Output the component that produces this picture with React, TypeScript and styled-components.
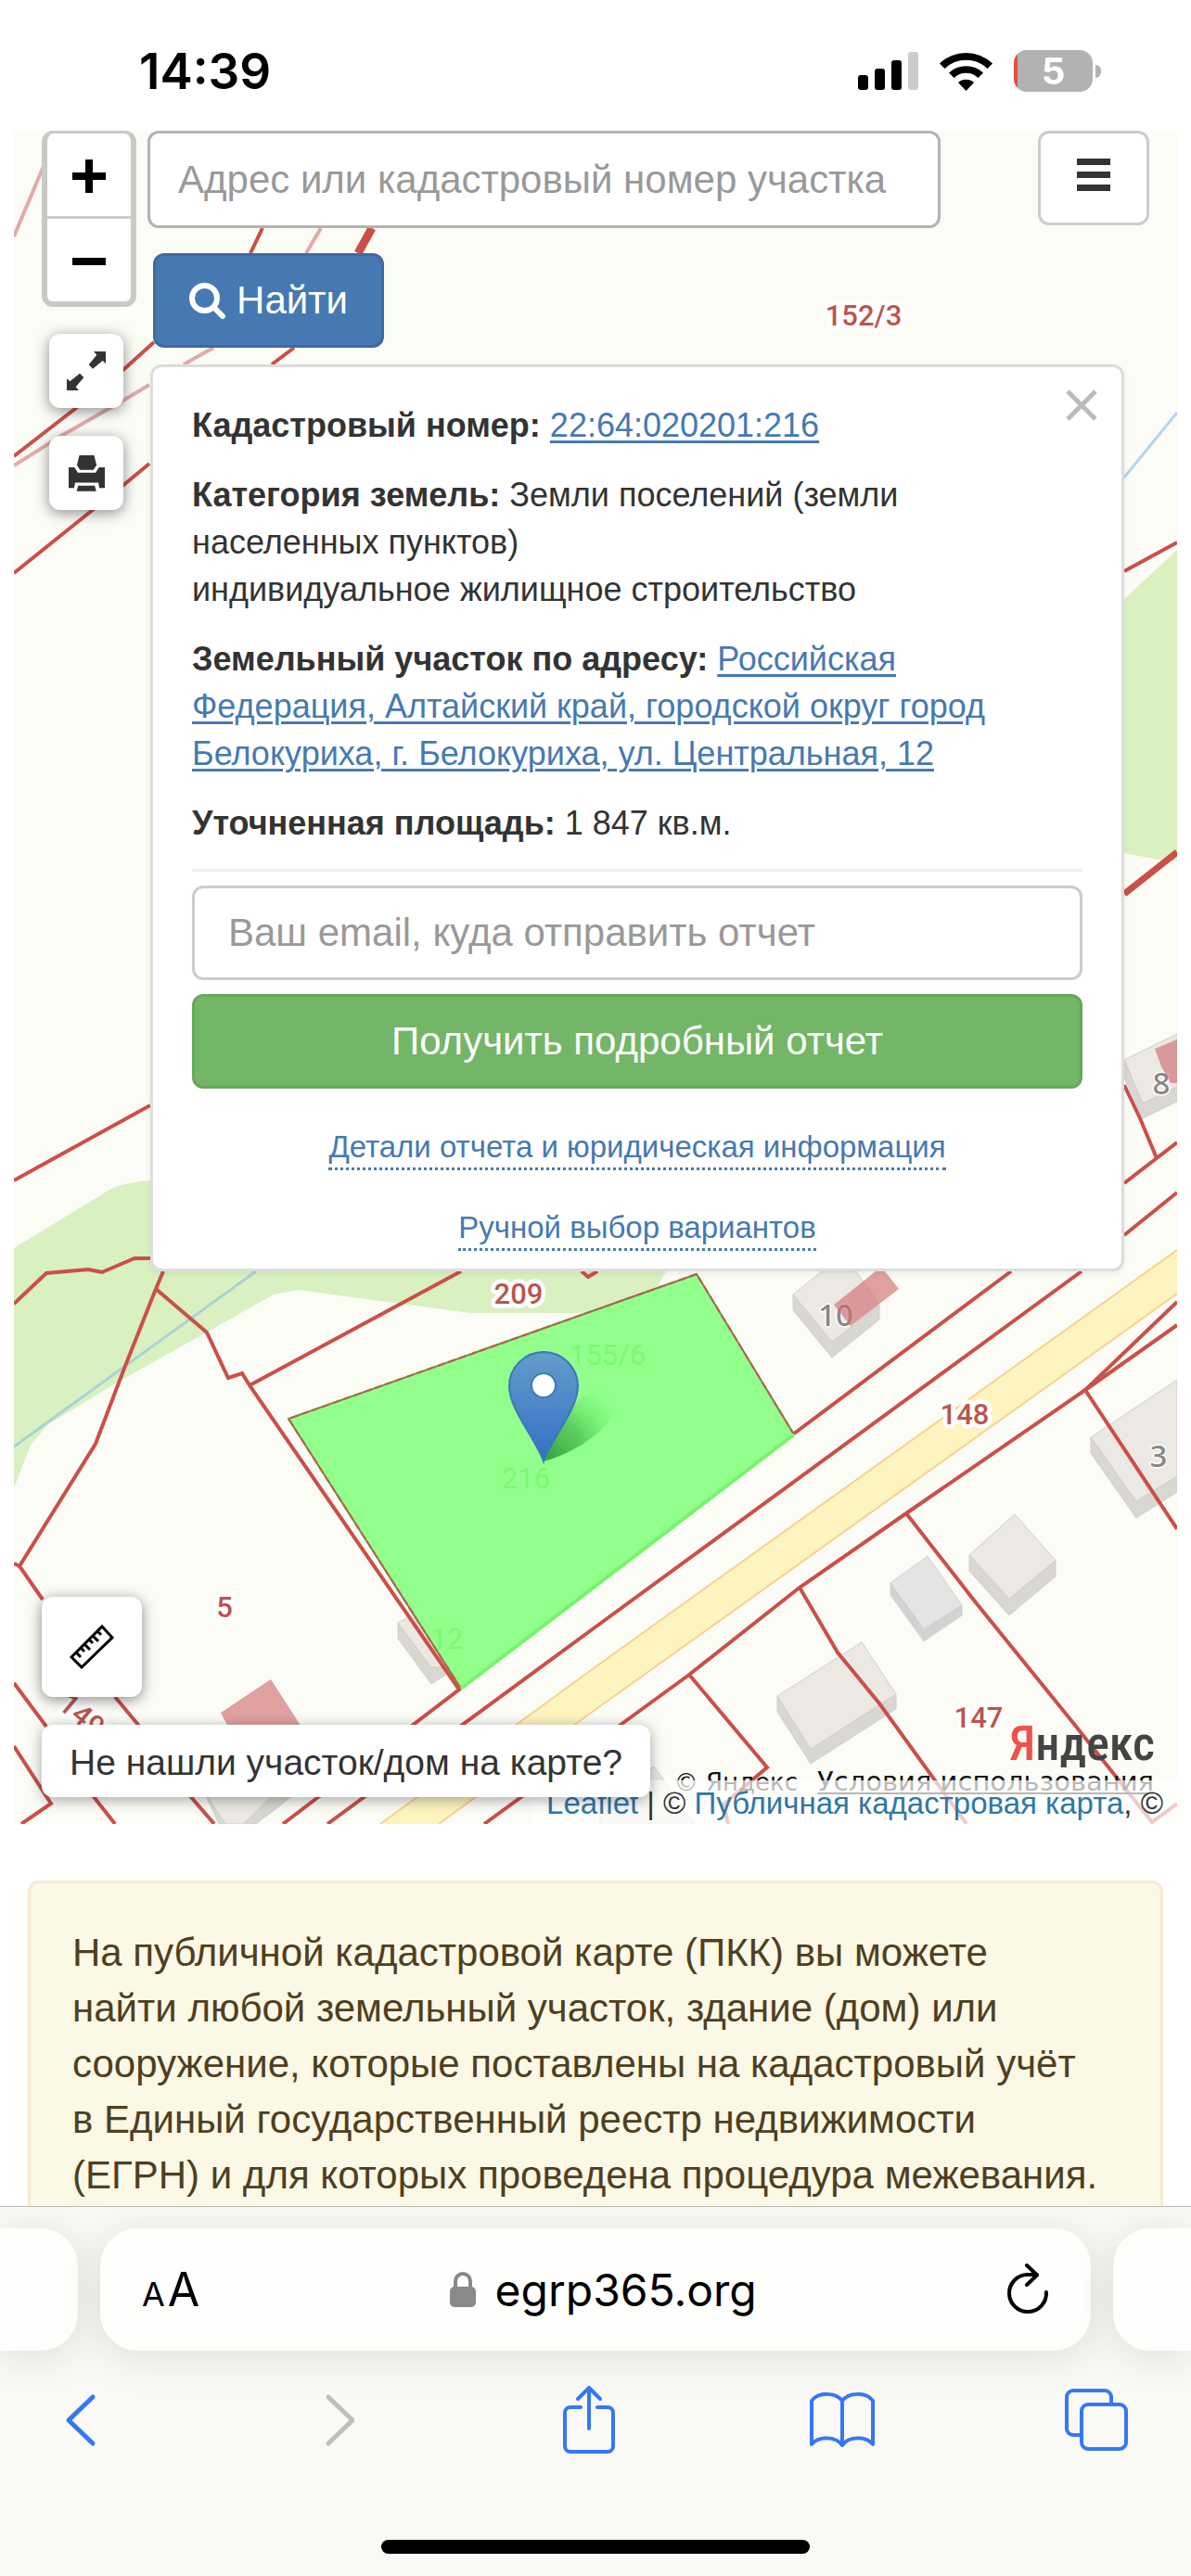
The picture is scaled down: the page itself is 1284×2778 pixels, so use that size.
import React from "react";
import styled, { createGlobalStyle } from "styled-components";

const sans = `"Liberation Sans", Arial, Helvetica, sans-serif`;
const system = `Inter, "Liberation Sans", sans-serif`;

const Global = createGlobalStyle`
  *, *::before, *::after { box-sizing: border-box; }
  body { margin: 0; background: #fff; font-family: ${sans}; color: #333; }
  button, input { font-family: inherit; }
  svg { display: block; flex: none; }
`;

const Page = styled.div`
  display: flex;
  flex-direction: column;
  min-height: 100vh;
`;

/* ---------- status bar ---------- */

const StatusBar = styled.header`
  display: flex;
  align-items: center;
  justify-content: space-between;
  height: 141px;
  padding: 12px 97px 0 150px;
  font-family: ${system};
`;

const Clock = styled.time`
  font-size: 53px;
  font-weight: 600;
  color: #000;
`;

const StatusIcons = styled.div`
  display: flex;
  align-items: center;
  gap: 23px;
`;

const Battery = styled.div`
  display: flex;
  align-items: center;
  gap: 3px;
`;

const BatteryBody = styled.span`
  display: grid;
  place-items: center;
  width: 85px;
  height: 45px;
  border-radius: 14px;
  background: linear-gradient(90deg, #eb4d3d 4px, #b2b2b2 4px);
  color: #fff;
  font-size: 40px;
  font-weight: 700;
  line-height: 45px;
`;

const BatteryTip = styled.span`
  width: 6px;
  height: 14px;
  border-radius: 0 6px 6px 0;
  background: #b2b2b2;
`;

/* ---------- map ---------- */

const MapSection = styled.section`
  position: relative;
  display: flex;
  flex-direction: column;
  min-height: 1826px;
  margin: 0 15px;
  overflow: hidden;
  background: #fbfcf6;
`;

const MapCanvas = styled.svg`
  position: absolute;
  inset: 0;
  width: 100%;
  height: 100%;
`;

const MapTop = styled.div`
  position: relative;
  display: flex;
  align-items: flex-start;
  gap: 12px;
  padding: 0 30px;
`;

const Tools = styled.div`
  display: flex;
  flex-direction: column;
  width: 102px;
`;

const ZoomBox = styled.div`
  display: flex;
  flex-direction: column;
  gap: 3px;
  border: 6px solid #c9cac5;
  border-top-width: 3px;
  border-radius: 12px;
  background: #ccc;
  overflow: hidden;
`;

const ZoomButton = styled.button`
  display: grid;
  place-items: center;
  height: 89px;
  padding: 3px 0 0;
  border: 0;
  background: #fff;
`;

const FloatButton = styled.button<{ $size: number }>`
  display: grid;
  place-items: center;
  width: ${(p) => p.$size}px;
  height: ${(p) => p.$size}px;
  padding: 0;
  border: 0;
  border-radius: 12px;
  background: #fff;
  box-shadow: 0 3px 15px rgba(0, 0, 0, 0.45);
`;

const SideButtons = styled.div`
  display: flex;
  flex-direction: column;
  gap: 30px;
  margin: 29px 0 0 8px;
`;

const MainColumn = styled.div`
  flex: 1;
  min-width: 0;
`;

const SearchRow = styled.form`
  display: flex;
  align-items: flex-start;
  justify-content: space-between;
  gap: 105px;
`;

const TextField = styled.input<{ $pad: number; $line: string }>`
  flex: 1;
  width: 100%;
  min-width: 0;
  height: ${(p) => (p.$pad > 33 ? 102 : 105)}px;
  padding: 0 ${(p) => p.$pad}px;
  border: 3px solid ${(p) => p.$line};
  border-radius: 12px;
  background: #fff;
  color: #555;
  font-size: 42px;
  &::placeholder { color: #999; opacity: 1; }
`;

const MenuButton = styled.button`
  display: grid;
  place-items: center;
  width: 120px;
  height: 102px;
  padding: 0 0 6px;
  border: 3px solid #ccc;
  border-radius: 12px;
  background: #fff;
`;

const ActionButton = styled.button<{ $tone: "blue" | "green" }>`
  display: flex;
  align-items: center;
  justify-content: center;
  gap: 12px;
  height: 102px;
  border: 3px solid ${(p) => (p.$tone === "blue" ? "#4069a0" : "#67a959")};
  border-radius: 12px;
  background: ${(p) => (p.$tone === "blue" ? "#4679b2" : "#73b667")};
  color: #fff;
  font-size: 42px;
`;

const FindButton = styled(ActionButton)`
  width: 249px;
  margin: 27px 0 18px 6px;
`;

const Panel = styled.article`
  position: relative;
  margin: 0 27px 0 3px;
  padding: 37px 42px 19px;
  border: 3px solid #ddd;
  border-radius: 12px;
  background: #fff;
  box-shadow: 0 3px 6px rgba(0, 0, 0, 0.06);
  font-size: 36px;
  line-height: 51px;
`;

const Close = styled.button`
  position: absolute;
  top: 19px;
  right: 21px;
  padding: 4px;
  border: 0;
  background: none;
`;

const Fact = styled.p`
  margin: 0 0 24px;
`;

const PlainLink = styled.a`
  color: #4679b2;
  text-decoration: underline;
  text-decoration-thickness: 3px;
  text-underline-offset: 4px;
`;

const Rule = styled.hr`
  height: 3px;
  margin: 0 0 15px;
  border: 0;
  background: #eee;
`;

const ReportForm = styled.form`
  display: flex;
  flex-direction: column;
  gap: 15px;
`;

const EmailField = styled(TextField)`
  flex: none;
`;

const Extra = styled.nav`
  display: flex;
  flex-direction: column;
  align-items: center;
  gap: 36px;
  margin-top: 37px;
  font-size: 33px;
`;

const DottedLink = styled.a`
  color: #4679b2;
  text-decoration: none;
  height: 51px;
  border-bottom: 3px dotted #4679b2;
  white-space: nowrap;
`;

const MapBottom = styled.div`
  position: relative;
  z-index: 1;
  display: flex;
  flex-direction: column;
  align-items: flex-start;
  gap: 30px;
  margin-top: auto;
  padding: 0 30px 29px;
`;

const Hint = styled.button`
  height: 78px;
  padding: 3px 30px 0;
  border: 0;
  border-radius: 12px;
  background: #fff;
  box-shadow: 0 3px 15px rgba(0, 0, 0, 0.35);
  color: #333;
  font-size: 39px;
  white-space: nowrap;
`;

const Credits = styled.div`
  position: absolute;
  right: 0;
  bottom: 0;
  display: flex;
  flex-direction: column;
  align-items: flex-end;
`;

const YandexLogo = styled.a`
  display: inline-block;
  height: 52px;
  margin-right: 24px;
  color: #444;
  font-family: "Liberation Sans Narrow", "Roboto Condensed", "DejaVu Sans Condensed", sans-serif;
  font-size: 52px;
  font-weight: 500;
  line-height: 78px;
  text-decoration: none;
  &::first-letter { color: #f0514b; }
`;

const Terms = styled.div`
  display: flex;
  align-items: baseline;
  gap: 21px;
  height: 26px;
  margin-right: 25px;
  color: #111;
  font-family: "DejaVu Sans", sans-serif;
  font-size: 26px;
  line-height: 54px;
  white-space: nowrap;
  a { color: inherit; font-size: 29px; }
`;

const Attribution = styled.div`
  position: relative;
  height: 47px;
  padding: 0 15px;
  background: rgba(255, 255, 255, 0.7);
  font-size: 33px;
  line-height: 50px;
  white-space: nowrap;
  a { color: #2f77a6; text-decoration: none; }
`;

/* ---------- notice ---------- */

const Notice = styled.section`
  flex: 1;
  margin: 61px 30px 0;
  padding: 45px 15px 0 45px;
  border: 3px solid #f5ebcf;
  border-bottom: 0;
  border-radius: 12px 12px 0 0;
  background: #fbf8e5;
  color: #4f3f20;
  font-size: 42px;
  line-height: 60px;
  p { margin: 0; }
`;

/* ---------- browser bar ---------- */

const Browser = styled.footer`
  position: relative;
  display: flex;
  flex-direction: column;
  align-items: center;
  height: 399px;
  padding: 23px 0 24px;
  border-top: 1px solid #b9b9b5;
  background: #faf9f5;
  overflow: hidden;
`;

const Tabs = styled.div`
  display: flex;
  gap: 24px;
  width: 100%;
`;

const Tab = styled.div<{ $side?: "left" | "right" }>`
  display: flex;
  align-items: center;
  justify-content: space-between;
  flex: ${(p) => (p.$side ? "none" : "1")};
  width: ${(p) => (p.$side ? "84px" : "auto")};
  height: 132px;
  padding: ${(p) => (p.$side ? "0" : "0 45px")};
  border-radius: ${(p) =>
    p.$side === "left" ? "0 40px 40px 0" : p.$side === "right" ? "40px 0 0 40px" : "40px"};
  background: #fefefd;
  box-shadow: 0 6px 45px rgba(60, 65, 40, 0.14);
  font-family: ${system};
  color: #000;
`;

const BareButton = styled.button`
  display: flex;
  align-items: baseline;
  justify-content: center;
  gap: 3px;
  padding: 0;
  border: 0;
  background: none;
  color: inherit;
`;

const Small = styled.span`
  font-size: 36px;
`;

const Big = styled.span`
  font-size: 50px;
`;

const Address = styled.div`
  display: flex;
  align-items: center;
  gap: 21px;
  font-size: 48px;
`;

const Toolbar = styled.nav`
  display: flex;
  justify-content: space-between;
  align-items: center;
  width: 100%;
  height: 150px;
  padding: 0 60px 0 45px;
  ${BareButton} { width: 84px; }
`;

const HomeBar = styled.div`
  width: 36%;
  height: 15px;
  margin-top: auto;
  border-radius: 8px;
  background: #000;
`;

function House({ top, side }: { top: string; side: string }) {
  return (
    <g stroke="#d2cecb" strokeWidth="1">
      <polygon points={side} fill="#d8d7d2" />
      <polygon points={top} fill="#ece9e4" />
    </g>
  );
}

const parcelLines = [
  "283,246 270,273",
  "166,369 135,397 82,440 15,492",
  "161,500 132,524 101,549 15,618",
  "317,375 293,393",
  "15,1406 50,1373 95,1369 110,1372 145,1357 162,1357",
  "176,1371 168,1390 135,1473 103,1557 21,1689 46,1725",
  "15,1686 21,1689",
  "168,1390 223,1437 246,1486 261,1481 269,1494 495,1822 305,1967",
  "269,1494 497,1371",
  "627,1371 634,1377 644,1371",
  "15,1815 50,1862",
  "15,1883 55,1945 23,1967",
  "124,1830 149,1860 206,1938 231,1967",
  "95,1930 124,1967",
  "15,1273 162,1192",
  "856,1546 1090,1371",
  "1166,1371 640,1756 353,1967",
  "1212,616 1269,585",
  "1212,1170 1229,1206 1247,1249",
  "1212,1276 1269,1232",
  "1212,1332 1269,1286",
  "1269,1404 1170,1499 977,1632 862,1712 743,1806 669,1860 522,1967",
  "1269,1429 1170,1499 1269,1649",
  "977,1632 1051,1727 1157,1858 1242,1965 1269,1945",
  "862,1712 903,1782 948,1837 1042,1967",
  "743,1806 827,1906 780,1946 785,1967",
];

const faintLines = [
  "66,141 50,172 15,255",
  "346,246 330,273",
  "230,375 198,393",
  "161,415 136,430 66,470 15,502",
];

function MapDrawing() {
  const label = {
    textAnchor: "middle" as const,
    fontFamily: "Roboto, sans-serif",
    fontSize: 31,
    fontWeight: 500,
    fill: "#b9564e",
    stroke: "#fff",
    strokeWidth: 9,
    strokeLinejoin: "round" as const,
    paintOrder: "stroke",
  };
  const house = { ...label, fontFamily: '"Noto Sans", sans-serif', fontSize: 33, fill: "#888", strokeWidth: 3 };
  const ghost = { ...label, fontWeight: 400, fill: "#7bf971", stroke: "none" };
  return (
    <MapCanvas viewBox="15 141 1254 1826" preserveAspectRatio="xMinYMin slice" aria-hidden="true">
      <defs>
        <linearGradient id="pin" x1="0" y1="0" x2="0" y2="1">
          <stop offset="0" stopColor="#649ccb" />
          <stop offset="1" stopColor="#3470c3" />
        </linearGradient>
        <radialGradient id="shade" gradientUnits="userSpaceOnUse" cx="590" cy="1572" r="95">
          <stop offset="0" stopColor="#2f9a3a" stopOpacity="0.9" />
          <stop offset="0.45" stopColor="#4fc455" stopOpacity="0.8" />
          <stop offset="1" stopColor="#6aff6a" stopOpacity="0" />
        </radialGradient>
      </defs>
      <path
        d="M162 1273 Q128 1276 115 1285 L15 1346 V1605 L33 1558 L52 1536 L126 1491 L295 1396 L321 1391 L507 1416 H670 Q692 1414 700 1402 L718 1371 V1273Z"
        fill="#d9f0c1"
      />
      <polygon points="1269,593 1212,646 1212,920 1255,928 1269,928" fill="#d9f0c1" />
      <path d="M15 1560 L276 1371" stroke="#a9d2d6" strokeWidth="3" />
      <path d="M1211 516 L1269 445" stroke="#b4d4ee" strokeWidth="3" />
      <polygon points="1269,1348 640,1799 410,1967 473,1967 640,1845 1269,1395" fill="#fdf4c0" />
      <path d="M1269 1348 L640 1799 L410 1967 M473 1967 L640 1845 L1269 1395" fill="none" stroke="#f8d190" strokeWidth="2" />

      <House top="1212,1143 1269,1115 1269,1172 1232,1190" side="1212,1143 1212,1162 1232,1206 1269,1188 1269,1172 1232,1190" />
      <House top="855,1396 886,1371 923,1371 948,1407 897,1447" side="855,1396 855,1413 897,1464 948,1423 948,1407 897,1447" />
      <House top="1269,1488 1176,1550 1225,1619 1269,1592" side="1176,1550 1176,1567 1225,1637 1269,1609 1269,1592 1225,1619" />
      <House top="1094,1633 1138,1683 1088,1724 1045,1677" side="1045,1677 1045,1694 1088,1742 1138,1700 1138,1683 1088,1724" />
      <g stroke="#d0d0d0">
        <polygon points="960,1707 960,1720 996,1770 1037,1742 1037,1731 996,1757" fill="#d2d2d2" />
        <polygon points="1000,1678 1037,1731 996,1757 960,1707" fill="#e4e4e4" />
      </g>
      <House top="929,1771 966,1827 874,1886 838,1829" side="838,1829 838,1846 874,1902 966,1843 966,1827 874,1886" />
      <House top="429,1750 446,1741 500,1798 465,1798" side="429,1750 429,1767 465,1816 490,1800 465,1798" />
      <House top="647,1940 705,1905 749,1967 647,1967" side="647,1940 647,1967" />
      <House top="219,1930 300,1930 262,1967 243,1967" side="219,1930 324,1930 276,1967 236,1967" />

      <text x="1252" y="1180" {...house}>8</text>
      <text x="901" y="1430" {...house}>10</text>
      <text x="1249" y="1582" {...house}>3</text>

      <g fill="#cf6f72" opacity="0.65">
        <polygon points="1245,1131 1269,1121 1269,1168 1262,1168 1252,1150" />
        <polygon points="899,1407 944,1371 954,1371 969,1390 917,1430" />
        <polygon points="292,1811 238,1847 250,1870 330,1870" />
      </g>

      <g fill="none" stroke="#cb4f48" strokeWidth="4">
        {parcelLines.map((p) => (
          <polyline key={p} points={p} />
        ))}
        <path d="M401 246 L386 273" strokeWidth="9" />
        <path d="M1212 964 L1269 919" strokeWidth="7" />
      </g>
      <g fill="none" stroke="#e2aaa8" strokeWidth="4">
        {faintLines.map((p) => (
          <polyline key={p} points={p} />
        ))}
      </g>

      <polygon points="311,1530 751,1374 856,1547 497,1821" fill="#92ff8c" />
      <path d="M497 1821 L311 1530 L751 1374 L856 1547" fill="none" stroke="#6f8a42" strokeWidth="2" />
      <path d="M497 1821 L311 1530 L751 1374 L856 1547" fill="none" stroke="#c25a48" strokeWidth="2" strokeDasharray="8 4" />
      <path d="M497 1821 L856 1547" stroke="#74f56b" strokeWidth="4" />

      <text x="931" y="351" {...label}>152/3</text>
      <text x="559" y="1406" {...label}>209</text>
      <text x="1040" y="1536" {...label}>148</text>
      <text x="1055" y="1863" {...label}>147</text>
      <text x="242" y="1744" {...label}>5</text>
      <text x="88" y="1860" transform="rotate(40 88 1850)" {...label}>149</text>
      <text x="655" y="1472" {...ghost}>155/6</text>
      <text x="567" y="1605" {...ghost}>216</text>
      <text x="482" y="1778" {...ghost}>12</text>

      <path d="M586 1576 C596 1530 640 1480 668 1500 C672 1530 630 1564 586 1576Z" fill="url(#shade)" />
      <path
        d="M586 1576 C578 1552 549 1520 549 1495 A37 37 0 0 1 623 1495 C623 1520 594 1552 586 1576Z"
        fill="url(#pin)"
        stroke="#3a77bd"
        strokeWidth="2"
      />
      <circle cx="586" cy="1494" r="13" fill="#fff" stroke="#3f79bb" strokeWidth="2" />
    </MapCanvas>
  );
}

export default function App() {
  return (
    <Page>
      <Global />
      <StatusBar>
        <Clock>14:39</Clock>
        <StatusIcons>
          <svg width="65" height="42" viewBox="0 0 65 42">
            <rect x="0" y="25" width="11" height="16" rx="3" />
            <rect x="18" y="18" width="11" height="23" rx="3" />
            <rect x="36" y="9" width="11" height="32" rx="3" />
            <rect x="54" y="0" width="11" height="41" rx="3" fill="#ccc" />
          </svg>
          <svg width="57" height="42" viewBox="0 0 57 42">
            <path d="M0 12.500 A41 41 0 0 1 57 12.500 L51.500 18 A33 33 0 0 0 5.500 18Z" />
            <path d="M10 22.500 A27 27 0 0 1 47 22.500 L41.500 28 A19 19 0 0 0 15.500 28Z" />
            <path d="M20 33 A13 13 0 0 1 37 33 L28.500 42Z" />
          </svg>
          <Battery>
            <BatteryBody>5</BatteryBody>
            <BatteryTip />
          </Battery>
        </StatusIcons>
      </StatusBar>

      <MapSection>
        <MapDrawing />
        <MapTop>
          <Tools>
            <ZoomBox>
              <ZoomButton type="button" aria-label="Приблизить">
                <svg width="36" height="36" viewBox="0 0 36 36">
                  <path d="M14 0h8v14h14v8H22v14h-8V22H0v-8h14z" />
                </svg>
              </ZoomButton>
              <ZoomButton type="button" aria-label="Отдалить">
                <svg width="36" height="36" viewBox="0 0 36 36">
                  <path d="M0 14h36v8H0z" />
                </svg>
              </ZoomButton>
            </ZoomBox>
            <SideButtons>
              <FloatButton type="button" $size={80} aria-label="Во весь экран">
                <svg width="42" height="42" viewBox="225 752 126 126" fill="#333">
                  <path d="M312 752H351V791L341 782L309 808L296 795L322 763Z" />
                  <path d="M264 878H225V840L235 849L267 823L280 836L254 867Z" />
                </svg>
              </FloatButton>
              <FloatButton type="button" $size={80} aria-label="Печать">
                <svg width="39" height="39" viewBox="219 1086 118 118" fill="#333">
                  <path d="M254 1086H302L310 1118L300 1134H256L246 1118Z" />
                  <path d="M219 1125H238L249 1143H307L318 1125H337V1193H319L316 1175H240L237 1193H219Z" />
                  <path d="M250 1185H304L309 1203H245Z" />
                </svg>
              </FloatButton>
            </SideButtons>
          </Tools>

          <MainColumn>
            <SearchRow>
              <TextField
                type="text"
                $pad={30}
                $line="#b3b3b3"
                aria-label="Адрес или кадастровый номер участка"
                placeholder="Адрес или кадастровый номер участка"
              />
              <MenuButton type="button" aria-label="Меню">
                <svg width="36" height="36" viewBox="0 0 36 36" fill="#333">
                  <path d="M0 0h36v7H0zM0 14h36v7H0zM0 28h36v7H0z" />
                </svg>
              </MenuButton>
            </SearchRow>
            <FindButton type="submit" $tone="blue">
              <svg width="39" height="39" viewBox="0 0 39 39" fill="none" stroke="#fff">
                <circle cx="16.500" cy="16.500" r="13.500" strokeWidth="6" />
                <path d="M27 27 L36 36" strokeWidth="6" strokeLinecap="round" />
              </svg>
              Найти
            </FindButton>

            <Panel>
              <Close type="button" aria-label="Закрыть">
                <svg width="36" height="36" viewBox="0 0 36 36">
                  <path d="M3 3 L33 33 M33 3 L3 33" stroke="#bbb" strokeWidth="5" />
                </svg>
              </Close>
              <Fact>
                <strong>Кадастровый номер:</strong> <PlainLink href="#number">22:64:020201:216</PlainLink>
              </Fact>
              <Fact>
                <strong>Категория земель:</strong> Земли поселений (земли населенных пунктов)
                <br />
                индивидуальное жилищное строительство
              </Fact>
              <Fact>
                <strong>Земельный участок по адресу:</strong>{" "}
                <PlainLink href="#address">
                  Российская Федерация, Алтайский край, городской округ город Белокуриха, г. Белокуриха, ул.
                  Центральная, 12
                </PlainLink>
              </Fact>
              <Fact>
                <strong>Уточненная площадь:</strong> 1 847 кв.м.
              </Fact>
              <Rule />
              <ReportForm>
                <EmailField
                  type="email"
                  $pad={36}
                  $line="#ccc"
                  aria-label="Ваш email, куда отправить отчет"
                  placeholder="Ваш email, куда отправить отчет"
                />
                <ActionButton type="submit" $tone="green">
                  Получить подробный отчет
                </ActionButton>
              </ReportForm>
              <Extra>
                <DottedLink href="#details">Детали отчета и юридическая информация</DottedLink>
                <DottedLink href="#manual">Ручной выбор вариантов</DottedLink>
              </Extra>
            </Panel>
          </MainColumn>
        </MapTop>

        <Credits>
          <YandexLogo href="#yandex">Яндекс</YandexLogo>
          <Terms>
            <span>© Яндекс</span>
            <a href="#terms">Условия использования</a>
          </Terms>
          <Attribution>
            <a href="#leaflet">Leaflet</a> | © <a href="#pkk">Публичная кадастровая карта</a>, ©
          </Attribution>
        </Credits>

        <MapBottom>
          <FloatButton type="button" $size={108} aria-label="Линейка">
            <svg width="48" height="48" viewBox="0 0 48 48" fill="none" stroke="#000">
              <path d="M35 2 L46 14 L13 46 L2 35Z" strokeWidth="3" />
              <path d="M7 30l5 5M12 25l4 4M16 21l6 6M21 16l4 4M25 12l6 6M30 7l4 4" strokeWidth="3" />
            </svg>
          </FloatButton>
          <Hint type="button">Не нашли участок/дом на карте?</Hint>
        </MapBottom>
      </MapSection>

      <Notice>
        <p>
          На публичной кадастровой карте (ПКК) вы можете
          <br />
          найти любой земельный участок, здание (дом) или
          <br />
          сооружение, которые поставлены на кадастровый учёт
          <br />
          в Единый государственный реестр недвижимости
          <br />
          (ЕГРН) и для которых проведена процедура межевания.
        </p>
      </Notice>

      <Browser>
        <Tabs>
          <Tab $side="left" />
          <Tab>
            <BareButton type="button" aria-label="Параметры страницы">
              <Small>A</Small>
              <Big>A</Big>
            </BareButton>
            <Address>
              <svg width="28" height="40" viewBox="0 0 28 40">
                <rect x="0" y="17" width="28" height="22" rx="5" fill="#89898b" />
                <path d="M6 18V11a8 8 0 0 1 16 0v7" fill="none" stroke="#89898b" strokeWidth="4" />
              </svg>
              egrp365.org
            </Address>
            <BareButton type="button" aria-label="Обновить">
              <svg width="46" height="56" viewBox="0 0 46 56" fill="none" stroke="#000" strokeWidth="4" strokeLinecap="round" strokeLinejoin="round">
                <path d="M43 31 A20 20 0 1 1 23 12 L33 12" />
                <path d="M22 2 L33 12.500 L22 23" />
              </svg>
            </BareButton>
          </Tab>
          <Tab $side="right" />
        </Tabs>
        <Toolbar>
          <BareButton type="button" aria-label="Назад">
            <svg width="42" height="60" viewBox="0 0 42 60" fill="none" stroke="#3478f6" strokeWidth="5" strokeLinecap="round" strokeLinejoin="round">
              <path d="M34 5 L8 30 L34 55" />
            </svg>
          </BareButton>
          <BareButton type="button" aria-label="Вперёд">
            <svg width="42" height="60" viewBox="0 0 42 60" fill="none" stroke="#bfbfbb" strokeWidth="5" strokeLinecap="round" strokeLinejoin="round">
              <path d="M14 5 L40 30 L14 55" />
            </svg>
          </BareButton>
          <BareButton type="button" aria-label="Поделиться">
            <svg width="60" height="74" viewBox="0 0 60 74" fill="none" stroke="#3478f6" strokeWidth="4" strokeLinecap="round" strokeLinejoin="round">
              <path d="M21 23H10a6 6 0 0 0-6 6v36a6 6 0 0 0 6 6h40a6 6 0 0 0 6-6V29a6 6 0 0 0-6-6H39M30 46V3M18 14L30 2L42 14" />
            </svg>
          </BareButton>
          <BareButton type="button" aria-label="Закладки">
            <svg width="72" height="62" viewBox="0 0 72 62" fill="none" stroke="#3478f6" strokeWidth="4" strokeLinecap="round" strokeLinejoin="round">
              <path d="M36 10C29 1 11 0 3 10V57C11 48 29 48 36 58C43 48 61 48 69 57V10C61 0 43 1 36 10ZM36 10V58" />
            </svg>
          </BareButton>
          <BareButton type="button" aria-label="Вкладки">
            <svg width="68" height="68" viewBox="0 0 68 68" fill="none" stroke="#3478f6" strokeWidth="4">
              <path d="M16 50H9a7 7 0 0 1-7-7V9a7 7 0 0 1 7-7H43a7 7 0 0 1 7 7V16" />
              <rect x="18" y="17" width="48" height="48" rx="7" />
            </svg>
          </BareButton>
        </Toolbar>
        <HomeBar />
      </Browser>
    </Page>
  );
}
